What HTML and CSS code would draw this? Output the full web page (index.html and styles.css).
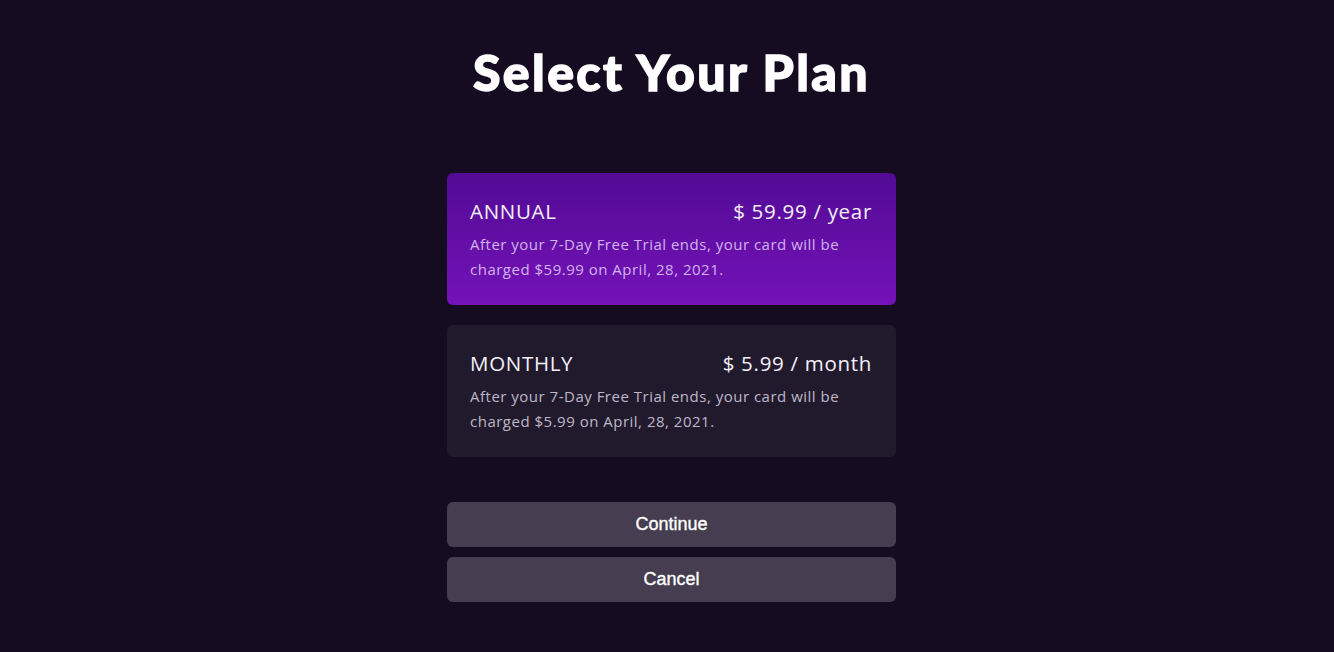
FILE: index.html
```html
<!DOCTYPE html>
<html lang="en">
<head>
<meta charset="UTF-8">
<meta name="viewport" content="width=device-width, initial-scale=1.0">
<title>Select Your Plan</title>
<link rel="stylesheet" href="styles.css">
</head>
<body>
  <div class="page">
    <h1 class="page-title">Select Your Plan</h1>

    <div class="plans">
      <div class="plan plan-selected">
        <div class="plan-head">
          <span class="plan-name">ANNUAL</span>
          <span class="plan-price">$ 59.99 / year</span>
        </div>
        <p class="plan-note">After your 7-Day Free Trial ends, your card will be charged $59.99 on April, 28, 2021.</p>
      </div>
      <div class="plan">
        <div class="plan-head">
          <span class="plan-name">MONTHLY</span>
          <span class="plan-price">$ 5.99 / month</span>
        </div>
        <p class="plan-note">After your 7-Day Free Trial ends, your card will be charged $5.99 on April, 28, 2021.</p>
      </div>
    </div>

    <div class="actions">
      <button class="btn">Continue</button>
      <button class="btn">Cancel</button>
    </div>
  </div>
</body>
</html>
```

FILE: styles.css
```css
body {
  margin: 0;
  padding: 0 0 0 9px;
  background-color: #150c21;
  font-family: "Open Sans", Arial, sans-serif;
  color: #fff;
  min-height: 100vh;
}

.page {
  width: 449px;
  margin: 0 auto;
  display: flex;
  flex-direction: column;
}

.page-title {
  margin: 40px -40px 0;
  font-family: Lato, "Open Sans", sans-serif;
  font-weight: 900;
  font-size: 50px;
  letter-spacing: 2.4px;
  -webkit-text-stroke: 1.4px #fff;
  line-height: 64px;
  text-align: center;
  color: #fff;
}

.plans {
  margin-top: 69px;
  display: flex;
  flex-direction: column;
  gap: 20px;
}

.plan {
  height: 132px;
  box-sizing: border-box;
  padding: 24px 24px 0 23px;
  border-radius: 6px;
  background-color: #211a2d;
}

.plan-selected {
  background: linear-gradient(to bottom, #520b94, #7412b8);
}

.plan-head {
  display: flex;
  justify-content: space-between;
  align-items: baseline;
  font-size: 20.5px;
  letter-spacing: 0.7px;
  line-height: 28px;
  color: #f4f0f8;
}

.plan-note {
  margin: 7px 0 0;
  font-size: 15px;
  letter-spacing: 0.5px;
  line-height: 25px;
  color: #bfb7c8;
}

.plan-selected .plan-note {
  color: #d2b3ee;
}

.actions {
  margin-top: 45px;
  display: flex;
  flex-direction: column;
  gap: 10px;
}

.btn {
  height: 45px;
  border: none;
  border-radius: 6px;
  background-color: #463e50;
  color: #fff;
  font-family: "Liberation Sans", Arial, sans-serif;
  font-size: 18px;
  font-weight: normal;
  -webkit-text-stroke: 0.35px #fff;
  cursor: pointer;
}
```
